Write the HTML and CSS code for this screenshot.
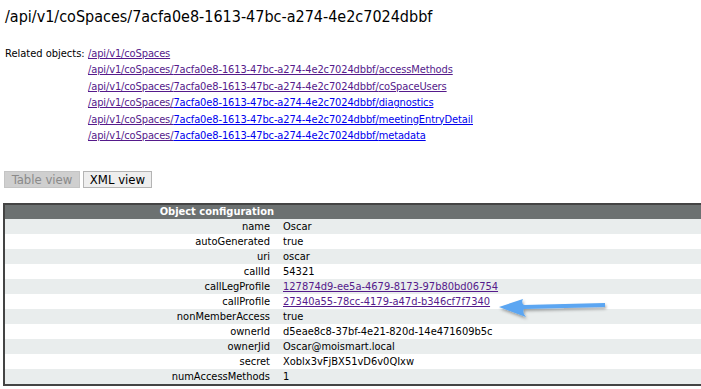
FILE: index.html
```html
<!DOCTYPE html>
<html lang="en">
<head>
  <meta charset="UTF-8">
  <title>/api/v1/coSpaces/7acfa0e8-1613-47bc-a274-4e2c7024dbbf</title>
  <link rel="stylesheet" href="styles.css">
</head>
<body>
  <h1 class="title">/api/v1/coSpaces/7acfa0e8-1613-47bc-a274-4e2c7024dbbf</h1>

  <!-- Related objects -->
  <div class="related">
    <span class="related-label">Related objects:</span>
    <div class="related-links">
      <div><a class="visited" href="#">/api/v1/coSpaces</a></div>
      <div><a class="visited" href="#">/api/v1/coSpaces/</a><a class="visited" href="#">7acfa0e8-1613-47bc-a274-4e2c7024dbbf/</a><a class="visited" href="#">accessMethods</a></div>
      <div><a class="visited" href="#">/api/v1/coSpaces/</a><a class="visited" href="#">7acfa0e8-1613-47bc-a274-4e2c7024dbbf/</a><a class="visited" href="#">coSpaceUsers</a></div>
      <div><a class="visited" href="#">/api/v1/coSpaces/</a><a href="#">7acfa0e8-1613-47bc-a274-4e2c7024dbbf/</a><a href="#">diagnostics</a></div>
      <div><a class="visited" href="#">/api/v1/coSpaces/</a><a href="#">7acfa0e8-1613-47bc-a274-4e2c7024dbbf/</a><a href="#">meetingEntryDetail</a></div>
      <div><a class="visited" href="#">/api/v1/coSpaces/</a><a href="#">7acfa0e8-1613-47bc-a274-4e2c7024dbbf/</a><a href="#">metadata</a></div>
    </div>
  </div>

  <!-- View switch -->
  <div class="views">
    <button class="view-btn table-btn" disabled>Table view</button>
    <button class="view-btn xml-btn">XML view</button>
  </div>

  <!-- Object configuration -->
  <div class="config-wrap">
    <table class="config">
      <thead>
        <tr><th class="key">Object configuration</th><th></th></tr>
      </thead>
      <tbody>
        <tr><td class="key">name</td><td>Oscar</td></tr>
        <tr><td class="key">autoGenerated</td><td>true</td></tr>
        <tr><td class="key">uri</td><td>oscar</td></tr>
        <tr><td class="key">callId</td><td>54321</td></tr>
        <tr><td class="key">callLegProfile</td><td><a class="visited" href="#">127874d9-ee5a-4679-8173-97b80bd06754</a></td></tr>
        <tr><td class="key">callProfile</td><td><a class="visited" href="#">27340a55-78cc-4179-a47d-b346cf7f7340</a></td></tr>
        <tr><td class="key">nonMemberAccess</td><td>true</td></tr>
        <tr><td class="key">ownerId</td><td>d5eae8c8-37bf-4e21-820d-14e471609b5c</td></tr>
        <tr><td class="key">ownerJid</td><td>Oscar@moismart.local</td></tr>
        <tr><td class="key">secret</td><td>Xoblx3vFjBX51vD6v0QIxw</td></tr>
        <tr><td class="key">numAccessMethods</td><td>1</td></tr>
      </tbody>
    </table>

    <!-- annotation arrow -->
    <svg class="arrow" width="120" height="30" viewBox="0 0 120 30">
      <defs>
        <filter id="shadow" x="-20%" y="-50%" width="140%" height="200%">
          <feDropShadow dx="1" dy="2" stdDeviation="1.5" flood-color="#000" flood-opacity="0.35"/>
        </filter>
      </defs>
      <path d="M2 13 L26 5 Q24 9 27 11 L108 9 L108 13 L27 15 Q25 19 29 23 Z" fill="#5ba6f2" filter="url(#shadow)"/>
    </svg>
  </div>
</body>
</html>
```

FILE: styles.css
```css
body {
  font-family: 'DejaVu Sans Condensed', 'DejaVu Sans', sans-serif;
  color: #000;
  background: #fff;
  margin: 0;
  padding: 0 0 0 3px;
}
a {
  color: #0000ee;
}
a.visited {
  color: #551a8b;
}
.title {
  font-size: 16px;
  font-weight: normal;
  margin: 0 2px;
  padding-top: 7px;
  line-height: 20px;
}
.related {
  display: flex;
  margin-top: 19px;
  font-size: 11px;
  line-height: 16.4px;
}
.related-label {
  width: 83px;
  padding-left: 2px;
  flex-shrink: 0;
}
.related-links {
  letter-spacing: -0.12px;
}
.views {
  display: flex;
  gap: 3px;
  margin-top: 27px;
  padding-left: 1px;
}
.view-btn {
  font-family: inherit;
  font-size: 13px;
  height: 17px;
  padding: 0;
  border: 1px solid #b4b4b4;
  background: #eeeeee;
  color: #000;
  line-height: 15px;
}
.table-btn {
  width: 76px;
}
.xml-btn {
  width: 69px;
}
.view-btn:disabled {
  background: #cfcfcf;
  border-color: #c4c4c4;
  color: #8a8a8a;
}
.config-wrap {
  position: relative;
  margin-top: 15px;
}
.config {
  border-collapse: separate;
  border-spacing: 0;
  width: 100%;
  border: 2px solid #444;
  border-right: none;
  font-size: 11px;
}
.config th {
  background: #6c7171;
  color: #fff;
  font-weight: bold;
  height: 14px;
  line-height: 14px;
  padding: 0;
}
.config th.key {
  padding-right: 2px;
}
.config td {
  height: 15px;
  padding: 0 0 0 7px;
  line-height: 15px;
}
.config .key {
  width: 265px;
  text-align: right;
  padding: 0 6px 0 0;
}
.config tbody tr:nth-child(odd) {
  background: #e9eded;
}
.arrow {
  position: absolute;
  left: 494px;
  top: 91px;
}
```
